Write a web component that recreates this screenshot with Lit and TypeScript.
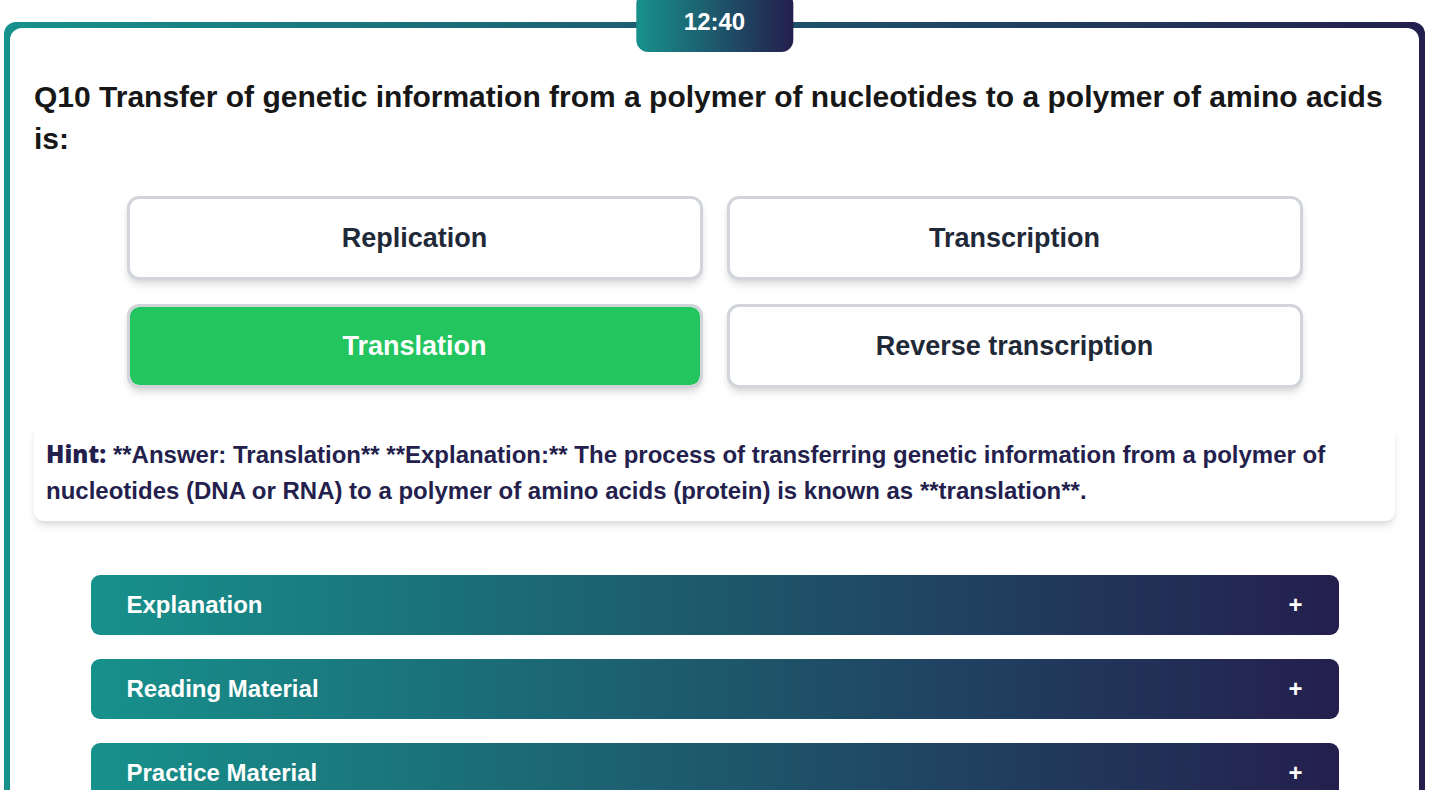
import { LitElement, html, css } from "lit";
import { customElement, state } from "lit/decorators.js";
import { classMap } from "lit/directives/class-map.js";

@customElement("app-root")
export class AppRoot extends LitElement {
  static styles = css`
    :host {
      --brand: linear-gradient(to right, #17918c, #241f4d);
      display: block;
      box-sizing: border-box;
      height: 100vh;
      overflow-y: auto;
      scrollbar-width: none;
      padding: 22px 30px 24px 4px;
      background: #fff;
      font-family: Arial, "Liberation Sans", sans-serif;
      font-weight: 700;
    }
    * {
      box-sizing: border-box;
    }
    .frame {
      position: relative;
      padding: 6px;
      border-radius: 12px;
      background: var(--brand);
    }
    .timer {
      position: absolute;
      top: -30px;
      left: 50%;
      transform: translateX(-50%);
      padding: 12px 48px;
      border-radius: 12px;
      background: var(--brand);
      color: #fff;
      font-size: 24px;
      line-height: 36px;
    }
    .card {
      padding: 48px 24px;
      border-radius: 12px;
      background: #fff;
    }
    h1 {
      margin: 0 0 36px;
      color: #171717;
      font-size: 30px;
      line-height: 42px;
    }
    .options {
      display: grid;
      grid-template-columns: 1fr 1fr;
      gap: 24px;
      max-width: 1176px;
      margin: 0 auto 36px;
    }
    button {
      font: inherit;
      cursor: pointer;
    }
    .option {
      padding: 18px;
      border: 3px solid #d1d5db;
      border-radius: 12px;
      background: #fff;
      box-shadow: 0 6px 9px -1px rgb(0 0 0 / 0.1), 0 3px 6px -2px rgb(0 0 0 / 0.1);
      color: #1f2937;
      font-size: 27px;
      line-height: 42px;
    }
    .option.correct {
      background: #22c55e;
      background-clip: padding-box;
      color: #fff;
    }
    .hint {
      margin: 0 0 54px;
      padding: 12px;
      border-radius: 9px;
      background: #fff;
      box-shadow: 0 6px 9px -1px rgb(0 0 0 / 0.1), 0 3px 6px -3px rgb(0 0 0 / 0.1);
      color: #241f4d;
      font-size: 24px;
      line-height: 36px;
    }
    .hint strong {
      font-family: "Arial Black", "Open Sans", sans-serif;
      font-weight: 800;
    }
    .sections {
      display: grid;
      gap: 24px;
      max-width: 1248px;
      margin: 0 auto;
    }
    .section {
      display: flex;
      justify-content: space-between;
      align-items: center;
      padding: 12px 36px;
      border: 0;
      border-radius: 9px;
      background: var(--brand);
      color: #fff;
      font-size: 24px;
      line-height: 36px;
    }
  `;

  private options = ["Replication", "Transcription", "Translation", "Reverse transcription"];
  private sections = ["Explanation", "Reading Material", "Practice Material"];

  @state() private selected = 2;

  render() {
    return html`
      <main class="frame">
        <div class="timer" role="timer">12:40</div>
        <div class="card">
          <h1>Q10 Transfer of genetic information from a polymer of nucleotides to a polymer of amino acids is:</h1>
          <div class="options">
            ${this.options.map(
              (label, i) => html`<button
                class=${classMap({ option: true, correct: i === this.selected })}
                @click=${() => (this.selected = i)}
              >${label}</button>`
            )}
          </div>
          <p class="hint"><strong>Hint:</strong> **Answer: Translation** **Explanation:** The process of transferring genetic information from a polymer of nucleotides (DNA or RNA) to a polymer of amino acids (protein) is known as **translation**.</p>
          <div class="sections">
            ${this.sections.map(
              (label) => html`<button class="section" aria-expanded="false"><span>${label}</span><span>+</span></button>`
            )}
          </div>
        </div>
      </main>
    `;
  }
}
